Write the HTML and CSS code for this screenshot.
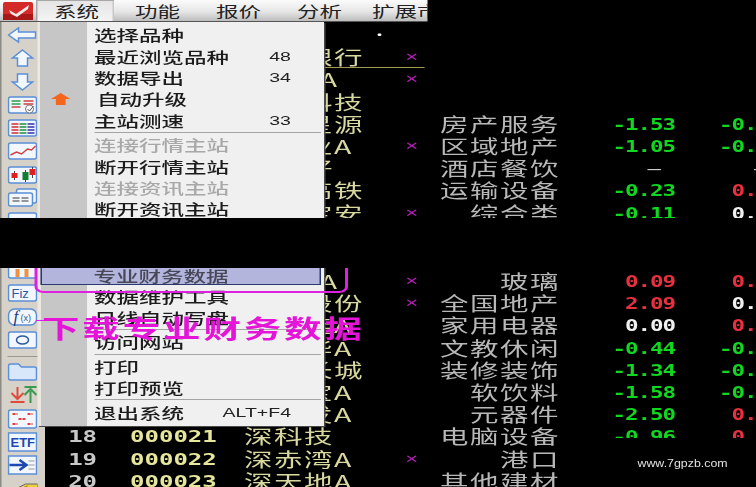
FILE: index.html
```html
<!DOCTYPE html>
<html>
<head>
  <meta charset="utf-8"/>
  <title>行情软件 系统菜单</title>
  <link rel="stylesheet" href="styles.css">
</head>
<body>
  <div class="stage">

    <!-- Upper half of the screenshot -->
    <section class="strip strip-top">
      <div class="menubar">
        <svg class="logo" viewBox="0 0 30 18" preserveAspectRatio="none">
          <rect width="30" height="18" rx="2" fill="#d42a2a"/>
          <rect y="12" width="30" height="6" fill="#a81818"/>
          <path d="M6 8 L13 12 L26 3 L25 7 L14 15 L8 12 Z" fill="#f4e8e4"/>
        </svg>
        <span class="tab tab-active">系统</span>
        <span class="tab">功能</span>
        <span class="tab">报价</span>
        <span class="tab">分析</span>
        <span class="tab tab-last">扩展市场</span>
      </div>
      <div class="strip-body">
        <div class="toolbar">
          <svg class="tool" viewBox="0 0 30 20" preserveAspectRatio="none"><path d="M1 10 L11 3 V7 H28 V13 H11 V17 Z" class="ic"/></svg>
          <svg class="tool" viewBox="0 0 30 20" preserveAspectRatio="none"><path d="M15 2 L25 10 H20 V18 H10 V10 H5 Z" class="ic"/></svg>
          <svg class="tool" viewBox="0 0 30 20" preserveAspectRatio="none"><path d="M15 18 L25 10 H20 V2 H10 V10 H5 Z" class="ic"/></svg>
          <svg class="tool" viewBox="0 0 30 20" preserveAspectRatio="none">
            <rect x="1" y="2" width="28" height="16" rx="2" class="ic"/>
            <path d="M4 6 H13 M4 9 H13" stroke="#2aa050" stroke-width="1.5"/>
            <path d="M4 12 H13" stroke="#d04040" stroke-width="1.5"/>
            <path d="M16 6 H26 M16 9 H26" stroke="#d04040" stroke-width="1.5"/>
            <circle cx="22" cy="14" r="4" fill="#fff" stroke="#777"/>
            <path d="M20 14 L22 16 L26 11" stroke="#555" fill="none"/>
          </svg>
          <svg class="tool" viewBox="0 0 30 20" preserveAspectRatio="none">
            <rect x="1" y="2" width="28" height="16" rx="2" class="ic"/>
            <path d="M4 6 H11 M4 9 H11 M4 12 H11 M4 15 H11" stroke="#d03030" stroke-width="1.5"/>
            <path d="M12 6 H19 M12 9 H19 M12 12 H19 M12 15 H19" stroke="#209040" stroke-width="1.5"/>
            <path d="M20 6 H27 M20 9 H27 M20 12 H27 M20 15 H27" stroke="#3030b0" stroke-width="1.5"/>
          </svg>
          <svg class="tool" viewBox="0 0 30 20" preserveAspectRatio="none">
            <rect x="1" y="2" width="28" height="16" rx="2" class="ic"/>
            <path d="M3 14 L9 11 L14 13 L20 8 L24 9 L28 5" stroke="#d04040" stroke-width="1.5" fill="none"/>
          </svg>
          <svg class="tool" viewBox="0 0 30 20" preserveAspectRatio="none">
            <rect x="1" y="2" width="28" height="16" rx="2" class="ic"/>
            <path d="M7 6 V15 M18 5 V17 M25 2 V13" stroke="#444"/>
            <rect x="4" y="8" width="6" height="5" fill="#e02020"/>
            <rect x="15" y="7" width="6" height="8" fill="#108030"/>
            <rect x="22" y="4" width="6" height="6" fill="#e02020"/>
          </svg>
          <svg class="tool" viewBox="0 0 30 20" preserveAspectRatio="none">
            <rect x="9" y="1" width="20" height="14" rx="2" class="ic"/>
            <rect x="1" y="5" width="24" height="13" rx="2" class="ic"/>
            <path d="M5 10 H12 M5 13 H12 M14 10 H21 M14 13 H21" stroke="#777" stroke-width="1.5"/>
          </svg>
          <svg class="tool" viewBox="0 0 30 20" preserveAspectRatio="none"><rect x="1" y="2" width="28" height="16" rx="2" class="ic"/></svg>
        </div>

        <div class="rows">
          <div class="row"><span class="num"></span><span class="code"></span><span class="name name-dot">•</span></div>
          <div class="row row-cursor"><span class="num"></span><span class="code"></span><span class="name">平安银行</span><span class="star">×</span></div>
          <div class="row"><span class="num"></span><span class="code"></span><span class="name">万 科 A</span><span class="star">×</span></div>
          <div class="row"><span class="num"></span><span class="code"></span><span class="name">国农科技</span></div>
          <div class="row"><span class="num"></span><span class="code"></span><span class="name">世纪星源</span><span class="star"></span><span class="sector">房产服务</span><span class="val down">-1.53</span><span class="val down">-0.31</span></div>
          <div class="row"><span class="num"></span><span class="code"></span><span class="name">深振业A</span><span class="star">×</span><span class="sector">区域地产</span><span class="val down">-1.05</span><span class="val down">-0.14</span></div>
          <div class="row"><span class="num"></span><span class="code"></span><span class="name">全新好</span><span class="star"></span><span class="sector">酒店餐饮</span><span class="val dash">—</span><span class="val dash">—</span></div>
          <div class="row"><span class="num"></span><span class="code"></span><span class="name">神州高铁</span><span class="star"></span><span class="sector">运输设备</span><span class="val down">-0.23</span><span class="val up">0.17</span></div>
          <div class="row"><span class="num"></span><span class="code"></span><span class="name">中国宝安</span><span class="star">×</span><span class="sector">综合类</span><span class="val down">-0.11</span><span class="val flat">0.00</span></div>
        </div>
      </div>

      <div class="menu">
        <div class="item"><i></i><span>选择品种</span></div>
        <div class="item"><i></i><span>最近浏览品种</span><b>48</b></div>
        <div class="item"><i></i><span>数据导出</span><b>34</b></div>
        <div class="item item-upgrade">
          <i><svg class="upgrade" viewBox="0 0 20 12" preserveAspectRatio="none"><path d="M10 0 L20 6 H15 V12 H5 V6 H0 Z" fill="#f4661c"/></svg></i>
          <span>自动升级</span>
        </div>
        <div class="item"><i></i><span>主站测速</span><b>33</b></div>
        <div class="sep"></div>
        <div class="item item-off"><i></i><span>连接行情主站</span></div>
        <div class="item"><i></i><span>断开行情主站</span></div>
        <div class="item item-off"><i></i><span>连接资讯主站</span></div>
        <div class="item"><i></i><span>断开资讯主站</span></div>
      </div>
    </section>

    <!-- Lower half of the screenshot -->
    <section class="strip strip-bottom">
      <div class="strip-body">
        <div class="toolbar toolbar-cut">
          <svg class="tool" viewBox="0 0 30 20" preserveAspectRatio="none">
            <rect x="1" y="2" width="28" height="16" rx="2" class="ic"/>
            <rect x="8" y="9" width="4" height="8" fill="#f09040"/><rect x="17" y="9" width="4" height="8" fill="#f09040"/>
          </svg>
          <svg class="tool" viewBox="0 0 30 20" preserveAspectRatio="none">
            <rect x="1" y="2" width="28" height="16" rx="2" class="ic"/>
            <text x="4" y="15" class="ic-text">Fiz</text>
          </svg>
          <svg class="tool" viewBox="0 0 30 20" preserveAspectRatio="none">
            <rect x="1" y="2" width="28" height="16" rx="6" class="ic"/>
            <text x="6" y="15" class="ic-fx">f</text>
            <text x="13" y="14" class="ic-fx-arg">(x)</text>
          </svg>
          <svg class="tool" viewBox="0 0 30 20" preserveAspectRatio="none">
            <rect x="1" y="2" width="28" height="16" rx="2" class="ic"/>
            <ellipse cx="15" cy="10" rx="6" ry="4" fill="none" stroke="#2a5aa0" stroke-width="1.5"/>
          </svg>
          <div class="tool-sep"></div>
          <svg class="tool" viewBox="0 0 30 20" preserveAspectRatio="none">
            <path d="M1 4 Q1 2 3 2 H11 L14 5 H27 Q29 5 29 7 V17 Q29 18 27 18 H3 Q1 18 1 16 Z" fill="#d8e8fa" stroke="#5b8fd6" stroke-width="1.5"/>
          </svg>
          <svg class="tool" viewBox="0 0 30 20" preserveAspectRatio="none">
            <path d="M10 2 V13 M4 8 L10 14 L16 8 M3 17 H17" stroke="#e04a3a" stroke-width="2" fill="none"/>
            <path d="M23 18 V6 M17 10 L23 4 L29 10 M17 2 H29" stroke="#3a9a50" stroke-width="2" fill="none"/>
          </svg>
          <svg class="tool" viewBox="0 0 30 20" preserveAspectRatio="none">
            <rect x="1" y="1" width="28" height="18" rx="2" class="ic"/>
            <path d="M5 5 H10 M20 5 H25 M5 15 H10 M20 15 H25 M11 10 H19" stroke="#e04040" stroke-width="2" stroke-dasharray="3 1"/>
          </svg>
          <svg class="tool" viewBox="0 0 30 20" preserveAspectRatio="none">
            <rect x="1" y="1" width="28" height="18" class="ic"/>
            <text x="3" y="15" class="ic-etf">ETF</text>
          </svg>
          <svg class="tool" viewBox="0 0 30 20" preserveAspectRatio="none">
            <rect x="1" y="1" width="28" height="18" class="ic"/>
            <path d="M2 10 H17 M12 5 L19 10 L12 15" stroke="#1c48b0" stroke-width="2.5" fill="none"/>
            <path d="M21 6 H27 M21 10 H27 M21 14 H27" stroke="#999"/>
          </svg>
          <svg class="tool" viewBox="0 0 30 20" preserveAspectRatio="none">
            <path d="M0 14 L18 5 L30 5 V14 L14 20 Z" fill="#e8d040" stroke="#666"/>
            <path d="M5 13 L20 7 M8 15 L24 9" stroke="#8a7a20"/>
          </svg>
        </div>

        <div class="rows">
          <div class="row"><span class="num"></span><span class="code"></span><span class="name">南 玻 A</span><span class="star">×</span><span class="sector">玻璃</span><span class="val up">0.09</span><span class="val up">0.17</span></div>
          <div class="row"><span class="num"></span><span class="code"></span><span class="name">沙河股份</span><span class="star">×</span><span class="sector">全国地产</span><span class="val up">2.09</span><span class="val flat">0.00</span></div>
          <div class="row"><span class="num"></span><span class="code"></span><span class="name">深康佳A</span><span class="star"></span><span class="sector">家用电器</span><span class="val flat">0.00</span><span class="val up">0.32</span></div>
          <div class="row"><span class="num"></span><span class="code"></span><span class="name">深中华A</span><span class="star"></span><span class="sector">文教休闲</span><span class="val down">-0.44</span><span class="val down">-0.16</span></div>
          <div class="row"><span class="num"></span><span class="code"></span><span class="name">神州长城</span><span class="star"></span><span class="sector">装修装饰</span><span class="val down">-1.34</span><span class="val down">-0.32</span></div>
          <div class="row"><span class="num"></span><span class="code"></span><span class="name">深深宝A</span><span class="star"></span><span class="sector">软饮料</span><span class="val down">-1.58</span><span class="val down">-0.08</span></div>
          <div class="row"><span class="num"></span><span class="code"></span><span class="name">深华发A</span><span class="star"></span><span class="sector">元器件</span><span class="val down">-2.50</span><span class="val up">0.06</span></div>
          <div class="row"><span class="num">18</span><span class="code">000021</span><span class="name">深科技</span><span class="star"></span><span class="sector">电脑设备</span><span class="val down">-0.96</span><span class="val up">0.12</span></div>
          <div class="row"><span class="num">19</span><span class="code">000022</span><span class="name">深赤湾A</span><span class="star">×</span><span class="sector">港口</span></div>
          <div class="row"><span class="num">20</span><span class="code">000023</span><span class="name">深天地A</span><span class="star"></span><span class="sector">其他建材</span></div>
        </div>
      </div>

      <div class="menu menu-cut">
        <div class="item item-sel"><i></i><span>专业财务数据</span></div>
        <div class="item"><i></i><span>数据维护工具</span></div>
        <div class="item"><i></i><span>日线自动写盘</span></div>
        <div class="sep"></div>
        <div class="item"><i></i><span>访问网站</span></div>
        <div class="sep"></div>
        <div class="item"><i></i><span>打印</span></div>
        <div class="item"><i></i><span>打印预览</span></div>
        <div class="sep"></div>
        <div class="item"><i></i><span>退出系统</span><b>ALT+F4</b></div>
      </div>

      <!-- Annotation drawn over the menu -->
      <div class="callout-box"></div>
      <div class="callout-line"></div>
      <div class="callout-text">下载专业财务数据</div>

      <div class="watermark"><span>www.7gpzb.com</span></div>
    </section>
  </div>
</body>
</html>
```

FILE: styles.css
```css
html, body {
  margin: 0;
  height: 100%;
  background: #000;
  overflow: hidden;
}

/* The shot is stretched 1.5x sideways, so everything below is in unstretched px */
.stage {
  width: 504px;
  height: 487px;
  display: flex;
  flex-direction: column;
  gap: 50px;
  transform: scaleX(1.5);
  transform-origin: 0 0;
  filter: blur(0.35px);
  font-family: "Noto Sans CJK SC", "Liberation Sans", sans-serif;
  overflow: hidden;
}

.strip {
  position: relative;
  overflow: hidden;
  width: 504px;
}
.strip-top { height: 218px; }
.strip-bottom { height: 219px; }
.strip-body {
  display: flex;
  align-items: flex-start;
}

/* Menu bar */
.menubar {
  width: 284.7px;
  height: 22px;
  box-sizing: border-box;
  display: flex;
  align-items: center;
  overflow: hidden;
  background: linear-gradient(#fbfbfb, #e6e6e6 55%, #bdbdbd);
  border-bottom: 1px solid #555;
  white-space: nowrap;
}
.logo {
  width: 20px;
  height: 18px;
  flex: none;
  margin: 0 2px;
}
.tab {
  flex: none;
  padding: 0 12px;
  height: 21px;
  line-height: 21px;
  font-size: 15px;
  color: #222;
}
.tab-active {
  padding-right: 9.5px;
  margin-right: 2.5px;
  background: linear-gradient(#e4e4e4, #f4f4f4);
  box-shadow: inset 1px 1px 0 #a8a8a8, inset -1px 0 0 #c8c8c8;
}
.tab-last { margin-left: -4px; }

/* Left tool column */
.toolbar {
  flex: none;
  width: 30px;
  box-sizing: border-box;
  padding: 3px 0 0 3.5px;
  align-self: stretch;
  height: 196px;
  display: flex;
  flex-direction: column;
  gap: 3.3px;
  background: #d6d2ca;
  border-left: 1.5px solid #8c8a84;
}
.toolbar-cut {
  height: 219px;
  padding-top: 0;
}
.toolbar-cut .tool:first-child { margin-top: -8px; }
.tool {
  flex: none;
  width: 20px;
  height: 20px;
}
.tool-sep {
  flex: none;
  height: 1px;
  margin: 2.35px 0;
  background: #9a9890;
}
.ic {
  fill: #f2f7fe;
  stroke: #5b8fd6;
  stroke-width: 1.5;
}
.ic-text {
  font: 13px "Liberation Sans", sans-serif;
  fill: #2a5aa0;
}
.ic-fx {
  font: italic 17px "Liberation Serif", serif;
  fill: #1c3a80;
}
.ic-fx-arg {
  font: 9px "Liberation Sans", sans-serif;
  fill: #2a5aa0;
}
.ic-etf {
  font: bold 13px "Liberation Sans", sans-serif;
  fill: #2048b0;
}

/* Quote table */
.rows {
  flex: none;
  width: 491px;
  padding-top: 2px;
}
.row {
  display: grid;
  grid-template-columns: 34.7px 98px 103.3px 17px 90.3px 76.7px 71px;
  height: 22.2px;
  line-height: 22.2px;
  white-space: nowrap;
}
.num, .code, .val {
  padding-top: 1px;
  font-family: "DejaVu Sans Mono", "Liberation Mono", monospace;
  font-weight: 700;
}
.num {
  text-align: right;
  font-size: 16px;
  color: #c8c8c8;
}
.code {
  padding-left: 22px;
  font-size: 16px;
  color: #e6e69c;
}
.name {
  font-size: 19px;
  letter-spacing: 1px;
  color: #d8d8a0;
}
.name-dot {
  text-align: right;
  padding-right: 6px;
  color: #fff;
  font-size: 12px;
}
.row-cursor .name,
.row-cursor .star {
  box-sizing: border-box;
  height: 22px;
  border-bottom: 1px solid #a09a50;
}
.star {
  text-align: center;
  font-size: 10px;
  font-weight: 700;
  color: #b820b8;
}
.sector {
  text-align: right;
  font-size: 19px;
  letter-spacing: 1px;
  color: #b8b8b8;
}
.val {
  text-align: right;
  font-size: 15px;
  letter-spacing: -0.7px;
}
.down { color: #10d820; }
.up { color: #e83040; }
.flat { color: #f0f0f0; }
.dash {
  color: #d0d0d0;
  padding-right: 10px;
  font-weight: 400;
}

/* Drop-down menu */
.menu {
  position: absolute;
  left: 24.7px;
  top: 22px;
  width: 191.3px;
  box-sizing: border-box;
  padding: 2px 0;
  background: linear-gradient(90deg, #ece8e0 2px, #c6c6c6 2px, #c6c6c6 32.7px, #f0f0f0 32.7px);
  box-shadow: 1px 1px 0 #4a4a4a;
}
.menu-cut {
  top: -6px;
  padding-bottom: 3px;
}
.item {
  display: grid;
  grid-template-columns: 38px 1fr auto;
  align-items: center;
  height: 21.4px;
  padding-right: 22px;
  font-size: 15px;
  font-weight: 500;
  color: #1c1c1c;
  white-space: nowrap;
}
.item i {
  display: flex;
  justify-content: center;
  padding-right: 6px;
}
.item b {
  font: 400 13px "Liberation Sans", sans-serif;
  color: #222;
}
.item-upgrade span { padding-left: 2px; }
.upgrade {
  width: 13px;
  height: 12px;
}
.item-off { color: #a8a8a8; }
.item-sel {
  box-sizing: border-box;
  margin: 0 2px;
  padding-right: 20px;
  grid-template-columns: 34.6px 1fr auto;
  background: #b3b5dc;
  border: 1.5px solid #2a3a70;
  border-width: 1.5px 1px;
  color: #484858;
}
.sep {
  height: 1px;
  margin: 1px 2px 1px 38px;
  background: #a4a4a4;
}

/* Magenta annotation */
.callout-box {
  position: absolute;
  left: 22.7px;
  top: -10px;
  width: 209.3px;
  height: 35px;
  box-sizing: border-box;
  border: 2px solid #e020e0;
  border-bottom-width: 2.5px;
  border-radius: 0 0 6px 6px;
}
.callout-line {
  position: absolute;
  left: 24px;
  top: 52px;
  width: 6px;
  height: 1px;
  background: #e020e0;
}
.callout-text {
  position: absolute;
  left: 28px;
  top: 41px;
  font-size: 25px;
  line-height: 36px;
  font-weight: 700;
  letter-spacing: 1.9px;
  color: #e414d8;
  white-space: nowrap;
}

/* Site mark pasted over the corner */
.watermark {
  position: absolute;
  left: 400px;
  top: 170px;
  right: 0;
  bottom: 0;
  background: #000;
}
.watermark span {
  position: absolute;
  left: 24.7px;
  top: 18px;
  font: 11px/14px "Liberation Sans", sans-serif;
  color: #e0e0e0;
  white-space: nowrap;
  transform: scaleX(0.75);
  transform-origin: 0 50%;
}
```
